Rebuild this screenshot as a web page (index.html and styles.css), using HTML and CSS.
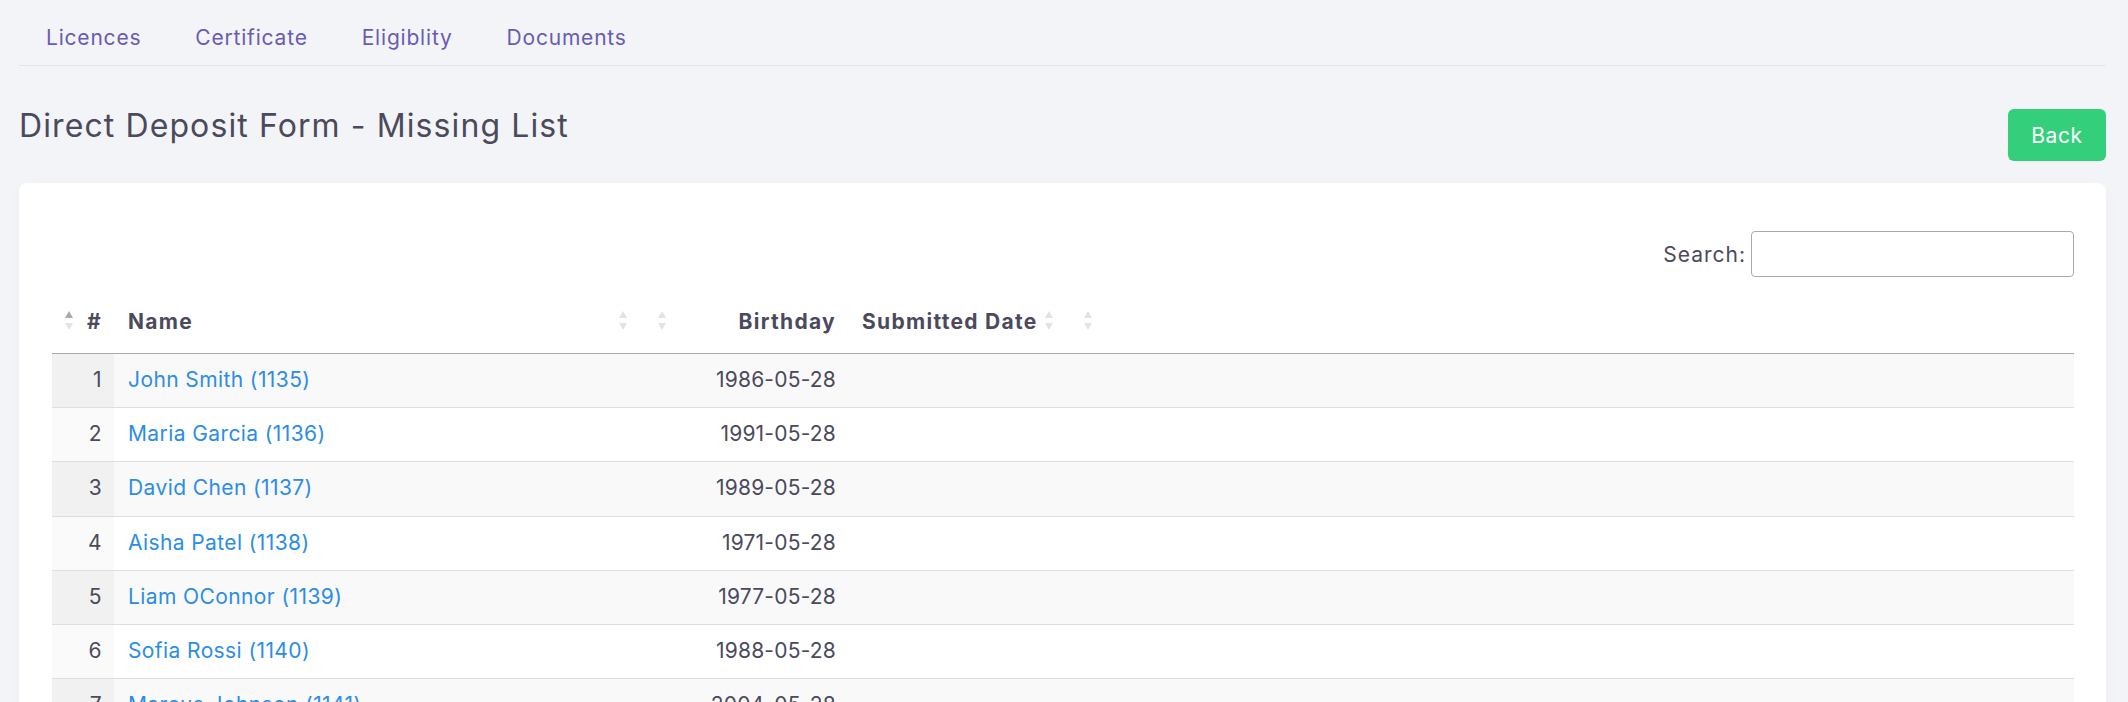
FILE: index.html
```html
<!DOCTYPE html>
<html lang="en">
<head>
  <meta charset="UTF-8" />
  <title>Direct Deposit Form - Missing List</title>
  <meta name="viewport" content="width=device-width, initial-scale=1" />
  <link rel="stylesheet" href="styles.css">
</head>
<body>

<div class="page">
  <nav class="tabs">
    <a href="#">Licences</a>
    <a href="#">Certificate</a>
    <a href="#">Eligiblity</a>
    <a href="#">Documents</a>
  </nav>

  <div class="page-head">
    <h1>Direct Deposit Form - Missing List</h1>
    <button class="btn-back">Back</button>
  </div>

  <div class="card">
    <div class="dt-search">
      <label for="search">Search:</label>
      <input type="search" id="search" />
    </div>

    <table class="dt">
      <colgroup>
        <col class="c-num" />
        <col class="c-name" />
        <col class="c-birth" />
        <col class="c-sub" />
        <col />
      </colgroup>
      <thead>
        <tr>
          <th class="right icon-left"><span class="sort asc"></span>#</th>
          <th class="icon-right">Name<span class="sort"></span></th>
          <th class="right icon-left"><span class="sort"></span>Birthday</th>
          <th class="icon-right">Submitted Date<span class="sort"></span></th>
          <th class="right icon-left"><span class="sort"></span></th>
        </tr>
      </thead>
      <tbody>
        <tr>
          <td class="right sorted">1</td>
          <td><a href="#">John Smith (1135)</a></td>
          <td class="right">1986-05-28</td>
          <td></td>
          <td></td>
        </tr>
        <tr>
          <td class="right sorted">2</td>
          <td><a href="#">Maria Garcia (1136)</a></td>
          <td class="right">1991-05-28</td>
          <td></td>
          <td></td>
        </tr>
        <tr>
          <td class="right sorted">3</td>
          <td><a href="#">David Chen (1137)</a></td>
          <td class="right">1989-05-28</td>
          <td></td>
          <td></td>
        </tr>
        <tr>
          <td class="right sorted">4</td>
          <td><a href="#">Aisha Patel (1138)</a></td>
          <td class="right">1971-05-28</td>
          <td></td>
          <td></td>
        </tr>
        <tr>
          <td class="right sorted">5</td>
          <td><a href="#">Liam OConnor (1139)</a></td>
          <td class="right">1977-05-28</td>
          <td></td>
          <td></td>
        </tr>
        <tr>
          <td class="right sorted">6</td>
          <td><a href="#">Sofia Rossi (1140)</a></td>
          <td class="right">1988-05-28</td>
          <td></td>
          <td></td>
        </tr>
        <tr>
          <td class="right sorted">7</td>
          <td><a href="#">Marcus Johnson (1141)</a></td>
          <td class="right">2004-05-28</td>
          <td></td>
          <td></td>
        </tr>
        <tr>
          <td class="right sorted">8</td>
          <td><a href="#">Emma Wilson (1142)</a></td>
          <td class="right">1995-05-28</td>
          <td></td>
          <td></td>
        </tr>
      </tbody>
    </table>
  </div>
</div>

</body>
</html>
```

FILE: styles.css
```css
:root {
  --bg: #f3f4f7;
  --text: #4b4a5c;
  --nav: #6a5bb5;
  --link: #2c8de6;
  --green: #34cf7a;
  --line: #dedede;
}

* {
  box-sizing: border-box;
}

body {
  margin: 0;
  background: var(--bg);
  font-family: Inter, "Noto Sans", sans-serif;
  font-size: 21px;
  letter-spacing: 0.4px;
  color: var(--text);
}

.page {
  padding: 0 22px 0 19px;
}

/* top tabs */
.tabs {
  display: flex;
  align-items: center;
  height: 66px;
  padding: 9px 0 0;
  border-bottom: 1px solid #e3e5ea;
}

.tabs a {
  padding: 0 27px;
  line-height: 27px;
  letter-spacing: 0.8px;
  color: var(--nav);
  text-decoration: none;
}

.page-head {
  display: flex;
  justify-content: space-between;
  align-items: flex-start;
  padding-top: 40px;
}

.page-head h1 {
  margin: 0;
  font-size: 32px;
  font-weight: 400;
  line-height: 39px;
  letter-spacing: 1.1px;
  color: var(--text);
}

.btn-back {
  margin-top: 3px;
  width: 98px;
  height: 52px;
  border: none;
  border-radius: 6px;
  background: var(--green);
  color: white;
  font-family: inherit;
  font-size: 21px;
  letter-spacing: 0.6px;
  cursor: pointer;
}

.card {
  margin-top: 22px;
  background: white;
  border-radius: 8px;
  padding: 48px 32px 40px 33px;
  box-shadow: 0 4px 14px rgba(0, 0, 0, 0.03);
}

.dt-search {
  display: flex;
  justify-content: flex-end;
  align-items: center;
  gap: 5px;
}

.dt-search label {
  letter-spacing: 1px;
}

.dt-search input {
  width: 323px;
  height: 46px;
  border: 1px solid #aaa;
  border-radius: 4px;
  padding: 5px;
  font-size: 21px;
}

/* data table */
.dt {
  width: 100%;
  margin-top: 20px;
  border-collapse: collapse;
  table-layout: fixed;
}

.c-num { width: 62px; }
.c-name { width: 531px; }
.c-birth { width: 203px; }
.c-sub { width: 223px; }

.dt th {
  position: relative;
  padding: 11px 13px 17px 14px;
  line-height: 28px;
  font-weight: 700;
  letter-spacing: 1.3px;
  text-align: left;
  white-space: nowrap;
  border-bottom: 1px solid #aaa;
}

.dt th.right {
  padding-right: 12px;
}

.dt .right {
  text-align: right;
}

.dt td {
  padding: 12px 12px 14px 14px;
  line-height: 27.2px;
  border-bottom: 1px solid var(--line);
}

.dt td.right:not(.sorted) {
  letter-spacing: 0.2px;
}

.dt tbody tr:nth-child(odd) {
  background: #f9f9f9;
}

.dt tbody tr:nth-child(odd) td.sorted {
  background: #f1f1f1;
}

.dt tbody tr:nth-child(even) td.sorted {
  background: #fafafa;
}

.dt a {
  color: var(--link);
  text-decoration: none;
}

/* sort arrows */
.sort {
  position: absolute;
  top: 14px;
  width: 8px;
  height: 19px;
}

.icon-left .sort { left: 13px; }
.icon-right .sort { right: 18px; }

.sort::before,
.sort::after {
  content: "";
  position: absolute;
  left: 0;
  border-left: 4px solid transparent;
  border-right: 4px solid transparent;
}

.sort::before {
  top: 0;
  border-bottom: 7px solid #e3e3e3;
}

.sort::after {
  bottom: 0;
  border-top: 7px solid #e3e3e3;
}

.sort.asc::before {
  border-bottom-color: #a9a9a9;
}
```
